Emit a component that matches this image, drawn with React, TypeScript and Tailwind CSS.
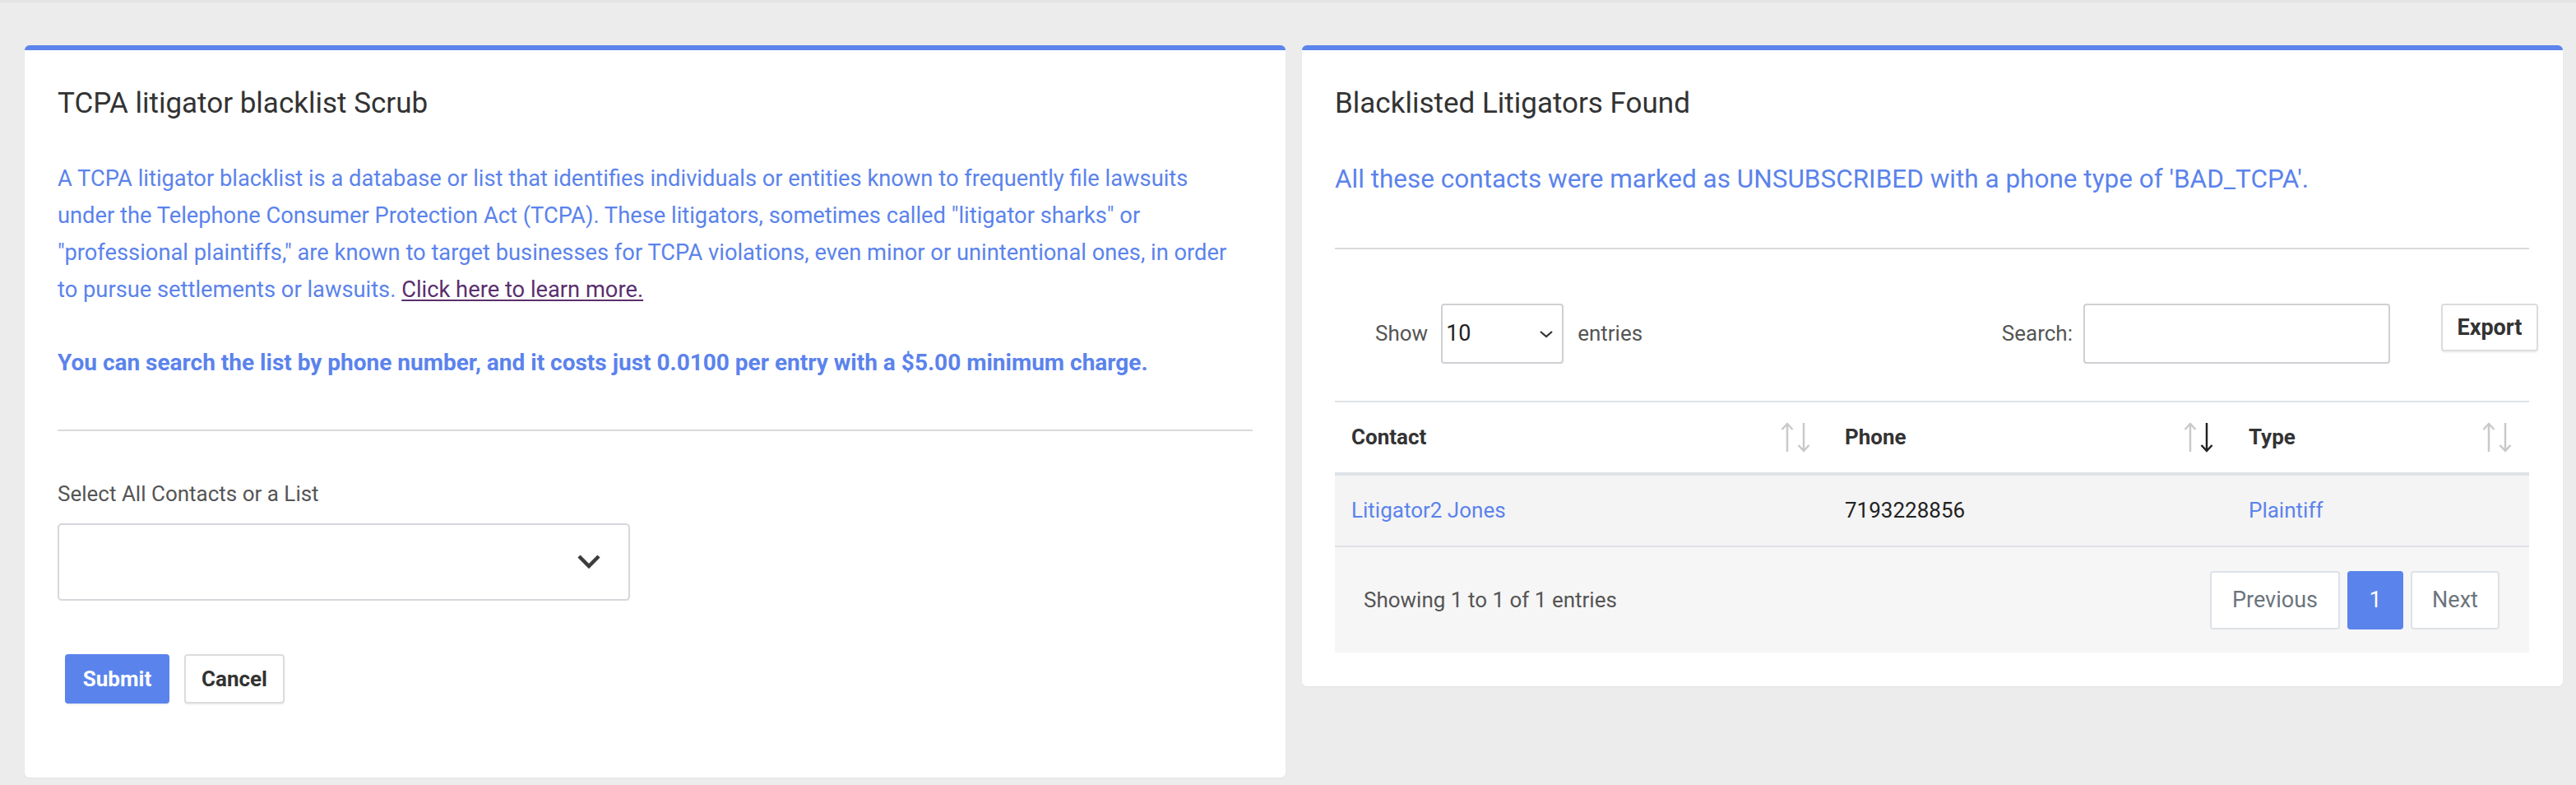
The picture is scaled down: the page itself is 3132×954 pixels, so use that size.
import React from "react";

function SortIcon({ active }: { active?: boolean }) {
  const light = "#c9c9c9";
  return (
    <svg width="36" height="37" viewBox="0 0 36 37" fill="none" strokeWidth="2.5" strokeLinecap="butt">
      <g stroke={light}>
        <line x1="8" y1="2" x2="8" y2="36" />
        <polyline points="1.5,9 8,2 14.5,9" />
      </g>
      <g stroke={active ? "#222222" : light}>
        <line x1="28" y1="1" x2="28" y2="35" />
        <polyline points="21.5,28 28,35 34.5,28" />
      </g>
    </svg>
  );
}

export default function App() {
  return (
    <div className="min-h-[954px] bg-[#ececec] font-['Roboto','Liberation_Sans',sans-serif] border-t-[3px] border-[#e4e4e4]">
      <div className="pt-[52px] pl-[30px] pr-[16px] flex gap-[20px] items-start">
        {/* Left card */}
        <div className="w-[1533px] h-[890px] bg-white rounded-[6px] border-t-[6px] border-[#5b84ec] shadow-[0_1px_2px_rgba(0,0,0,0.04)] px-[40px] pt-[43px]">
          <h2 className="text-[35px] leading-[44px] font-normal text-[#333]">TCPA litigator blacklist Scrub</h2>
          <p className="mt-[47px] text-[27.3px] leading-[45px] font-normal text-[#5b83ec]">
            A TCPA litigator blacklist is a database or list that identifies individuals or entities known to frequently file lawsuits{" "}
            <br />
            under the Telephone Consumer Protection Act (TCPA). These litigators, sometimes called "litigator sharks" or{" "}
            <br />
            "professional plaintiffs," are known to target businesses for TCPA violations, even minor or unintentional ones, in order{" "}
            <br />
            to pursue settlements or lawsuits.{" "}
            <a href="#" className="text-[#5a2f6e] underline underline-offset-[3px]">Click here to learn more.</a>
          </p>
          <p className="mt-[43px] text-[28px] leading-[45px] font-bold text-[#5b83ec]">
            You can search the list by phone number, and it costs just 0.0100 per entry with a $5.00 minimum charge.
          </p>
          <div className="mt-[59px] h-[2px] bg-[#d9d9d9]" />
          <label className="block mt-[56px] text-[26px] leading-[40px] text-[#555]">Select All Contacts or a List</label>
          <div className="mt-[16px] w-[696px] h-[94px] border-2 border-[#d6d6dc] rounded-[5px] flex items-center justify-end pr-[34px]">
            <svg width="28" height="18" viewBox="0 0 28 18" fill="none">
              <polyline points="2,2 14,14 26,2" stroke="#3c3c3c" strokeWidth="4.5" />
            </svg>
          </div>
          <div className="mt-[65px] ml-[9px] flex gap-[18px]">
            <button className="w-[127px] h-[60px] bg-[#5a84ec] rounded-[4px] text-white text-[26px] font-bold shadow-[0_2px_2px_rgba(0,0,0,0.06)]">Submit</button>
            <button className="w-[122px] h-[60px] bg-white border-2 border-[#dcdcdc] rounded-[4px] text-[#333] text-[26px] font-bold shadow-[0_2px_2px_rgba(0,0,0,0.05)]">Cancel</button>
          </div>
        </div>

        {/* Right card */}
        <div className="w-[1533px] h-[779px] bg-white rounded-[6px] border-t-[6px] border-[#5b84ec] shadow-[0_1px_2px_rgba(0,0,0,0.04)] pl-[40px] pr-[41px] pt-[43px]">
          <h2 className="text-[35px] leading-[44px] font-normal text-[#333]">Blacklisted Litigators Found</h2>
          <p className="mt-[47px] text-[31.5px] leading-[45px] font-normal text-[#5b83ec]">
            All these contacts were marked as UNSUBSCRIBED with a phone type of 'BAD_TCPA'.
          </p>
          <div className="mt-[61px] h-[2px] bg-[#d9d9d9]" />

          <div className="mt-[66px] w-[1463px] flex items-start">
            <div className="ml-[49px] flex items-center h-[73px] text-[26px] text-[#555]">
              <span>Show</span>
              <div className="ml-[16px] w-[149px] h-[73px] border-2 border-[#cfcfd4] rounded-[4px] flex items-center justify-between pl-[4px] pr-[10px] text-[27px] text-[#222]">
                <span>10</span>
                <svg width="18" height="10" viewBox="0 0 18 10" fill="none">
                  <polyline points="2,2 9,8 16,2" stroke="#333" strokeWidth="2.2" />
                </svg>
              </div>
              <span className="ml-[17px]">entries</span>
            </div>
            <div className="ml-auto flex items-center h-[73px] text-[26px] text-[#555]">
              <span>Search:</span>
              <div className="ml-[13px] w-[373px] h-[73px] border-2 border-[#cfcfd4] rounded-[4px]" />
            </div>
            <button className="ml-[62px] w-[118px] h-[58px] bg-white border-2 border-[#dcdcdc] rounded-[4px] text-[#333] text-[27px] font-bold shadow-[0_2px_2px_rgba(0,0,0,0.06)]">Export</button>
          </div>

          <div className="mt-[45px] border-t-2 border-[#dee2e6]">
            <div className="flex h-[85px] items-center text-[26px] font-bold text-[#333] border-b-4 border-[#dee2e6] box-content">
              <div className="w-[600px] flex items-center justify-between pl-[20px] pr-[22px]">
                <span>Contact</span>
                <SortIcon />
              </div>
              <div className="w-[491px] flex items-center justify-between pl-[20px] pr-[23px]">
                <span>Phone</span>
                <SortIcon active />
              </div>
              <div className="flex-1 flex items-center justify-between pl-[20px] pr-[21px]">
                <span>Type</span>
                <SortIcon />
              </div>
            </div>
            <div className="flex h-[85px] items-center text-[26px] bg-[#f4f4f4] border-b-2 border-[#dee2e6] box-content">
              <div className="w-[600px] pl-[20px] text-[#5b83ec]">Litigator2 Jones</div>
              <div className="w-[491px] pl-[20px] text-[#222]">7193228856</div>
              <div className="flex-1 pl-[20px] text-[#5b83ec]">Plaintiff</div>
            </div>
            <div className="h-[128px] bg-[#f6f6f6] flex items-center justify-between pl-[35px] pr-[36px]">
              <span className="text-[26px] text-[#555]">Showing 1 to 1 of 1 entries</span>
              <div className="flex items-center gap-[9px] text-[27px]">
                <div className="w-[158px] h-[71px] bg-white border-2 border-[#dee2e6] rounded-[4px] flex items-center justify-center text-[#6c757d]">Previous</div>
                <div className="w-[68px] h-[71px] bg-[#5a84ec] rounded-[4px] flex items-center justify-center text-white">1</div>
                <div className="w-[108px] h-[71px] bg-white border-2 border-[#dee2e6] rounded-[4px] flex items-center justify-center text-[#6c757d]">Next</div>
              </div>
            </div>
          </div>
        </div>
      </div>
    </div>
  );
}
